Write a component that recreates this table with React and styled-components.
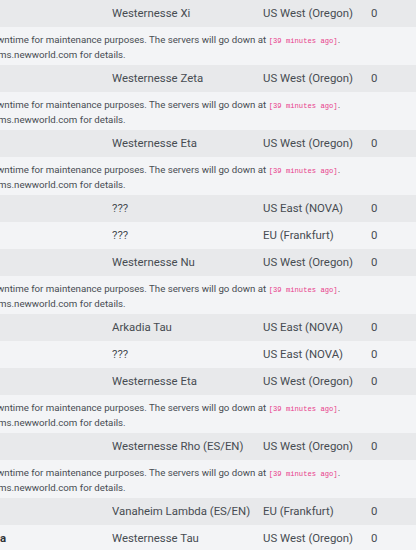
import React from 'react';
import styled, { createGlobalStyle } from 'styled-components';

const GlobalStyle = createGlobalStyle`
  html, body {
    margin: 0;
    padding: 0;
    background: #f3f4f6;
  }
  body {
    font-family: Roboto, "Noto Sans", sans-serif;
    color: #474c52;
  }
`;

const Viewport = styled.div`
  width: 416px;
  height: 550px;
  overflow: hidden;
  background: #f3f4f6;
`;

const Table = styled.div`
  display: flex;
  flex-direction: column;
  width: 416px;
`;

const Row = styled.div`
  display: grid;
  grid-template-columns: 112px 151px 108px 1fr;
  align-items: center;
  height: 27px;
  background: ${p => (p.striped ? '#e8e9eb' : '#f3f4f6')};
  font-size: 11.4px;
  white-space: nowrap;
`;

const Cell = styled.div`
  overflow: hidden;
  line-height: 27px;
`;

const Lead = styled(Cell)`
  font-weight: 700;
  color: #2f3337;
`;

const Message = styled.div`
  height: 38px;
  box-sizing: border-box;
  padding-top: 6px;
  background: #f3f4f6;
  font-size: 9.7px;
  line-height: 13px;
  color: #474c52;
  white-space: nowrap;
  overflow: hidden;
`;

const Line = styled.div`
  margin-left: ${p => p.shift}px;
`;

const Code = styled.code`
  font-family: "Liberation Mono", "DejaVu Sans Mono", monospace;
  font-size: 7.2px;
  color: #e83e8c;
`;

const rows = [
  { name: 'Westernesse Xi', region: 'US West (Oregon)', maint: true },
  { name: 'Westernesse Zeta', region: 'US West (Oregon)', maint: true },
  { name: 'Westernesse Eta', region: 'US West (Oregon)', maint: true },
  { name: '???', region: 'US East (NOVA)' },
  { name: '???', region: 'EU (Frankfurt)' },
  { name: 'Westernesse Nu', region: 'US West (Oregon)', maint: true },
  { name: 'Arkadia Tau', region: 'US East (NOVA)' },
  { name: '???', region: 'US East (NOVA)' },
  { name: 'Westernesse Eta', region: 'US West (Oregon)', maint: true },
  { name: 'Westernesse Rho (ES/EN)', region: 'US West (Oregon)', maint: true },
  { name: 'Vanaheim Lambda (ES/EN)', region: 'EU (Frankfurt)' },
  { name: 'Westernesse Tau', region: 'US West (Oregon)', lead: 'a' },
];

function MaintenanceNote() {
  return (
    <Message>
      <Line shift={-3}>
        wntime for maintenance purposes. The servers will go down at <Code>[39 minutes ago]</Code>.
      </Line>
      <Line shift={-2}>ms.newworld.com for details.</Line>
    </Message>
  );
}

export default function App() {
  let stripe = 0;
  const items = [];
  rows.forEach((r, i) => {
    items.push(
      <Row key={'r' + i} striped={stripe % 2 === 0}>
        <Lead>{r.lead || ''}</Lead>
        <Cell>{r.name}</Cell>
        <Cell>{r.region}</Cell>
        <Cell>0</Cell>
      </Row>
    );
    stripe++;
    if (r.maint) {
      items.push(<MaintenanceNote key={'m' + i} />);
      stripe++;
    }
  });

  return (
    <Viewport>
      <GlobalStyle />
      <Table>{items}</Table>
    </Viewport>
  );
}
